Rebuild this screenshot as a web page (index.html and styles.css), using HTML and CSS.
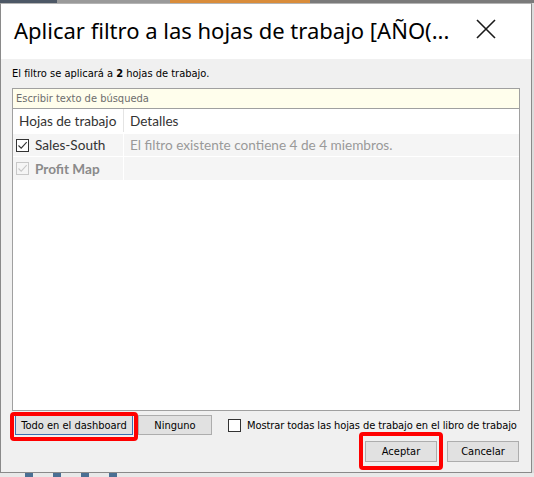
FILE: index.html
```html
<!DOCTYPE html>
<html lang="es">
<head>
<meta charset="utf-8">
<title>Aplicar filtro</title>
<link rel="stylesheet" href="styles.css">
</head>
<body>
<div class="strip strip-top"><span class="s1"></span><span class="s2"></span><span class="s3"></span><span class="s4"></span></div>
<div class="window">
  <div class="titlebar">
    <h1 class="title">Aplicar filtro a las hojas de trabajo [AÑO(...</h1>
    <svg class="close" width="20" height="20" viewBox="0 0 20 20"><path d="M1 1 L19 19 M19 1 L1 19" stroke="#1a1a1a" stroke-width="1.6" fill="none"/></svg>
  </div>
  <div class="body">
    <p class="info">El filtro se aplicará a <b>2</b> hojas de trabajo.</p>
    <div class="search">Escribir texto de búsqueda</div>
    <div class="list">
      <div class="row head">
        <div class="c1">Hojas de trabajo</div>
        <div class="c2">Detalles</div>
      </div>
      <div class="row item">
        <div class="c1"><span class="cb"><svg width="11" height="11" viewBox="0 0 11 11"><path d="M1.5 5.5 L4.2 8.2 L9.7 2.2" stroke="#333" stroke-width="1.1" fill="none"/></svg></span><span class="name">Sales-South</span></div>
        <div class="c2 detail">El filtro existente contiene 4 de 4 miembros.</div>
      </div>
      <div class="row item">
        <div class="c1"><span class="cb disabled"><svg width="11" height="11" viewBox="0 0 11 11"><path d="M1.5 5.5 L4.2 8.2 L9.7 2.2" stroke="#c8c8c8" stroke-width="1.1" fill="none"/></svg></span><span class="name bold">Profit Map</span></div>
        <div class="c2 detail"></div>
      </div>
    </div>
    <div class="actions1">
      <button class="btn btn-todo">Todo en el dashboard<span class="mark mark-todo"></span></button>
      <button class="btn btn-ninguno">Ninguno</button>
      <label class="show-all"><span class="cb2"></span>Mostrar todas las hojas de trabajo en el libro de trabajo</label>
    </div>
    <div class="actions2">
      <button class="btn btn-ok">Aceptar<span class="mark mark-ok"></span></button>
      <button class="btn btn-cancel">Cancelar</button>
    </div>
  </div>
</div>
<div class="strip strip-bottom"><span class="b1"></span><span class="b2"></span><span class="b3"></span><span class="b4"></span></div>
</body>
</html>
```

FILE: styles.css
```css
* { box-sizing: border-box; }
html, body { margin: 0; padding: 0; }
body {
  width: 534px;
  height: 477px;
  overflow: hidden;
  background: #dcdcdc;
  font-family: "DejaVu Sans Condensed", "DejaVu Sans", sans-serif;
}
.strip { display: flex; }
.strip-top { height: 3px; background: #8c8c8c; }
.strip-top .s1 { width: 57px; background: #4d5866; }
.strip-top .s2 { width: 113px; background: #9a9a9a; }
.strip-top .s3 { width: 140px; background: #d98c3a; }
.strip-top .s4 { flex: 1; background: #7a7a7a; }
.strip-bottom { height: 4px; background: #e9e9e9; gap: 20px; padding-left: 25px; }
.strip-bottom span { width: 8px; background: #4a6f93; }
.window {
  width: 532px;
  height: 470px;
  background: #f0f0f0;
  border: 1px solid #8a8a8a;
  border-top-color: #b4b4b4;
  display: flex;
  flex-direction: column;
}
.titlebar {
  height: 55px;
  background: #ffffff;
  display: flex;
  align-items: center;
  padding: 0 0 0 13px;
}
.title {
  margin: 0;
  flex: 1;
  font-family: "Noto Sans", "Open Sans", sans-serif;
  font-weight: 400;
  font-size: 22px;
  color: #000;
  white-space: nowrap;
  padding-bottom: 3px;
}
.close { margin-right: 35px; margin-bottom: 5px; }
.body {
  flex: 1;
  padding: 8px 11px 10px 11px;
  display: flex;
  flex-direction: column;
}
.info {
  margin: 0;
  height: 13px;
  line-height: 13px;
  font-size: 11px;
  color: #000;
}
.info b { font-weight: 700; }
.search {
  margin-top: 8px;
  height: 21px;
  border: 1px solid #a0a0a0;
  background: #fffeec;
  font-size: 11px;
  color: #6d6d6d;
  padding: 3px 0 0 3px;
  line-height: 14px;
}
.list {
  height: 302px;
  background: #ffffff;
  border: 1px solid #a0a0a0;
  border-top: none;
  font-family: "Lato", "Open Sans", sans-serif;
  font-size: 13.6px;
}
.row { display: flex; }
.c1 { width: 111px; display: flex; align-items: center; }
.c2 { flex: 1; display: flex; align-items: center; padding-left: 6px; }
.head { height: 24px; color: #333; padding-bottom: 1px; }
.head .c1 { padding-left: 6px; border-right: 1px solid #e4e4e4; }
.item { height: 23px; background: #f5f5f5; border-top: 1px solid #ffffff; }
.item + .item { height: 24px; }
.item .c1 { border-right: 1px solid #ffffff; padding-left: 3px; }
.cb {
  width: 13px;
  height: 13px;
  border: 1px solid #333;
  background: #fff;
  display: flex;
  align-items: center;
  justify-content: center;
  margin-right: 6px;
}
.cb.disabled { border-color: #c8c8c8; background: #f5f5f5; }
.name { color: #333; }
.name.bold { font-weight: 700; color: #8a8a8a; }
.detail { color: #999; }
.actions1 {
  margin-top: 4px;
  height: 20px;
  display: flex;
  align-items: center;
  padding-left: 3px;
}
.btn {
  position: relative;
  font-family: "DejaVu Sans Condensed", "DejaVu Sans", sans-serif;
  font-size: 11px;
  color: #000;
  background: #e1e1e1;
  border: 1px solid #adadad;
  border-radius: 0;
  padding: 0;
  margin: 0;
  height: 20px;
}
.btn-todo { width: 118px; border-color: #3b6fb0; }
.btn-ninguno { width: 74px; margin-left: 5px; }
.mark {
  position: absolute;
  border: 4px solid #ff0000;
  border-radius: 4px;
  pointer-events: none;
}
.mark-todo { top: -4px; left: -6px; right: -6px; bottom: -7px; }
.mark-ok { top: -10px; left: -7px; right: -7px; bottom: -9px; }
.show-all {
  margin-left: 16px;
  display: flex;
  align-items: center;
  font-size: 11px;
  letter-spacing: -0.09px;
  color: #000;
  white-space: nowrap;
}
.cb2 {
  width: 13px;
  height: 13px;
  border: 1px solid #333;
  background: #fff;
  margin-right: 6px;
}
.actions2 {
  margin-top: 6px;
  height: 21px;
  display: flex;
  justify-content: flex-end;
  gap: 10px;
  padding-right: 1px;
}
.btn-ok, .btn-cancel { width: 72px; height: 21px; }
```
